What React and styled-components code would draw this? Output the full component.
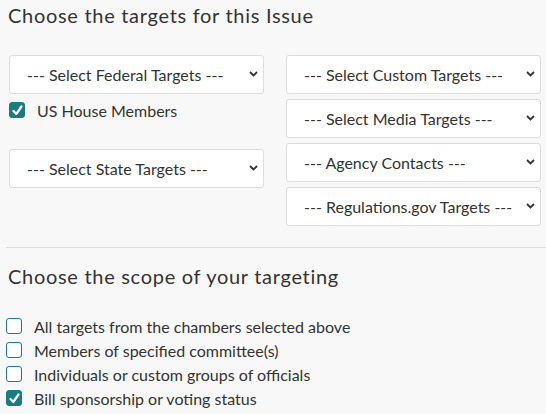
import React from 'react';
import styled, { createGlobalStyle } from 'styled-components';

const GlobalStyle = createGlobalStyle`
  html, body {
    margin: 0;
    padding: 0;
    background: #f8f8f8;
  }
  body {
    font-family: 'Lato', 'Liberation Sans', sans-serif;
    color: #333;
  }
`;

const Page = styled.div`
  width: 546px;
  height: 414px;
  overflow: hidden;
  box-sizing: border-box;
  padding: 2px 5px 0 8px;
`;

const Heading = styled.h2`
  margin: 0;
  font-size: 20px;
  line-height: 26px;
  font-weight: 400;
  letter-spacing: 0.7px;
  color: #333;
`;

const TargetGrid = styled.div`
  display: grid;
  grid-template-columns: 255px 255px;
  column-gap: 22px;
  margin-top: 27px;
  padding-left: 1px;
  align-items: start;
`;

const Column = styled.div`
  display: flex;
  flex-direction: column;
`;

const SelectWrap = styled.div`
  position: relative;
  margin-top: ${p => p.top || 0}px;
  margin-bottom: 5px;
`;

const Select = styled.select`
  appearance: none;
  -webkit-appearance: none;
  width: 100%;
  height: 39px;
  box-sizing: border-box;
  border: 1px solid #dcdcdc;
  border-radius: 3px;
  background: #fff;
  padding: 0 28px 0 17px;
  font-family: inherit;
  font-size: 16px;
  color: #333;
  outline: none;
`;

const Chevron = styled.svg`
  position: absolute;
  right: 6px;
  top: 16px;
  width: 9px;
  height: 6px;
  pointer-events: none;
`;

const CheckRow = styled.label`
  display: flex;
  align-items: center;
  gap: ${p => p.gap || 12}px;
  height: ${p => p.h || 24}px;
  font-size: 16px;
  color: #333;
  margin-top: ${p => p.top || 0}px;
`;

const Box = styled.span`
  width: 16px;
  height: 16px;
  box-sizing: border-box;
  border-radius: 3px;
  border: 1.5px solid #1a7b82;
  background: ${p => (p.checked ? '#1a7b82' : '#fff')};
  display: flex;
  align-items: center;
  justify-content: center;
  flex-shrink: 0;
`;

const Divider = styled.hr`
  border: none;
  border-top: 1px solid #dddddd;
  margin: 16px -5px 15px -2px;
`;

const ScopeList = styled.div`
  display: flex;
  flex-direction: column;
  margin-top: 25px;
  margin-left: -2px;
`;

const Dropdown = ({ label, top }) => (
  <SelectWrap top={top}>
    <Select defaultValue="">
      <option value="">{label}</option>
    </Select>
    <Chevron viewBox="0 0 9 6">
      <path d="M1 1 L4.5 4.5 L8 1" fill="none" stroke="#333" strokeWidth="1.8" />
    </Chevron>
  </SelectWrap>
);

const Checkbox = ({ checked, children, ...rest }) => (
  <CheckRow {...rest}>
    <Box checked={checked}>
      {checked && (
        <svg width="11" height="11" viewBox="0 0 11 11">
          <path d="M1.5 6 L4.3 9 L9.5 1.5" fill="none" stroke="#fff" strokeWidth="2.2" strokeLinecap="round" strokeLinejoin="round" />
        </svg>
      )}
    </Box>
    <span>{children}</span>
  </CheckRow>
);

const scopes = [
  { label: 'All targets from the chambers selected above', checked: false },
  { label: 'Members of specified committee(s)', checked: false },
  { label: 'Individuals or custom groups of officials', checked: false },
  { label: 'Bill sponsorship or voting status', checked: true }
];

export default function App() {
  return (
    <Page>
      <GlobalStyle />
      <Heading>Choose the targets for this Issue</Heading>
      <TargetGrid>
        <Column>
          <Dropdown label="--- Select Federal Targets ---" />
          <Checkbox checked h={16} top={3}>US House Members</Checkbox>
          <Dropdown label="--- Select State Targets ---" top={31} />
        </Column>
        <Column>
          <Dropdown label="--- Select Custom Targets ---" />
          <Dropdown label="--- Select Media Targets ---" />
          <Dropdown label="--- Agency Contacts ---" />
          <Dropdown label="--- Regulations.gov Targets ---" />
        </Column>
      </TargetGrid>
      <Divider />
      <Heading>Choose the scope of your targeting</Heading>
      <ScopeList>
        {scopes.map(s => (
          <Checkbox key={s.label} checked={s.checked} gap={12}>
            {s.label}
          </Checkbox>
        ))}
      </ScopeList>
    </Page>
  );
}
